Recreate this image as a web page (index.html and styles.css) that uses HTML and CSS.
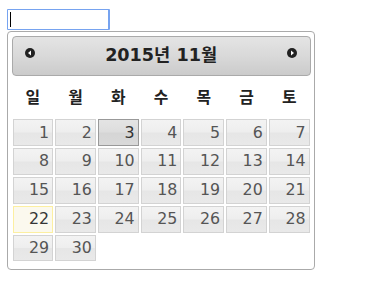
FILE: index.html
```html
<!DOCTYPE html>
<html lang="ko">
<head>
<meta charset="utf-8">
<link rel="stylesheet" href="styles.css">
</head>
<body>
<div class="page">
  <span class="field"><input class="date-input" type="text"></span>
  <div class="datepicker">
    <div class="dp-header">
      <a class="dp-nav dp-prev" title="이전달">
        <svg width="16" height="16" viewBox="0 0 16 16"><circle cx="8" cy="8" r="5" fill="#222"/><polygon points="6,8 9,5.5 9,10.5" fill="#fff"/></svg>
      </a>
      <a class="dp-nav dp-next" title="다음달">
        <svg width="16" height="16" viewBox="0 0 16 16"><circle cx="8" cy="8" r="5" fill="#222"/><polygon points="10,8 7,5.5 7,10.5" fill="#fff"/></svg>
      </a>
      <div class="dp-title">2015년 11월</div>
    </div>
    <table class="dp-cal">
      <thead>
        <tr><th>일</th><th>월</th><th>화</th><th>수</th><th>목</th><th>금</th><th>토</th></tr>
      </thead>
      <tbody>
        <tr><td><a class="day">1</a></td><td><a class="day">2</a></td><td><a class="day hover">3</a></td><td><a class="day">4</a></td><td><a class="day">5</a></td><td><a class="day">6</a></td><td><a class="day">7</a></td></tr>
        <tr><td><a class="day">8</a></td><td><a class="day">9</a></td><td><a class="day">10</a></td><td><a class="day">11</a></td><td><a class="day">12</a></td><td><a class="day">13</a></td><td><a class="day">14</a></td></tr>
        <tr><td><a class="day">15</a></td><td><a class="day">16</a></td><td><a class="day">17</a></td><td><a class="day">18</a></td><td><a class="day">19</a></td><td><a class="day">20</a></td><td><a class="day">21</a></td></tr>
        <tr><td><a class="day today">22</a></td><td><a class="day">23</a></td><td><a class="day">24</a></td><td><a class="day">25</a></td><td><a class="day">26</a></td><td><a class="day">27</a></td><td><a class="day">28</a></td></tr>
        <tr><td><a class="day">29</a></td><td><a class="day">30</a></td><td></td><td></td><td></td><td></td><td></td></tr>
      </tbody>
    </table>
  </div>
</div>
</body>
</html>
```
FILE: styles.css
```css
html, body {
  margin: 0;
  padding: 0;
  background: #fff;
}
.page {
  padding: 9px 0 0 7px;
  font-family: "DejaVu Sans", Verdana, "Noto Sans CJK KR", sans-serif;
}
.field {
  position: relative;
  display: block;
  width: 103px;
  height: 21px;
}
.field::after {
  content: "";
  position: absolute;
  left: 3px;
  top: 3px;
  width: 1px;
  height: 15px;
  background: #000;
}
.date-input {
  box-sizing: border-box;
  display: block;
  width: 103px;
  height: 21px;
  margin: 0;
  padding: 0 2px;
  border: 1px solid #76a3f0;
  border-right-width: 2px;
  border-radius: 1px;
  outline: none;
  background: #fff;
}
.datepicker {
  margin-top: 1px;
  width: 17em;
  font-size: 17.6px;
  padding: 0.2em 0.2em 0;
  border: 1px solid #aaa;
  border-radius: 4px;
  background: #fff;
  color: #222;
}
.dp-header {
  position: relative;
  padding: 0.2em 0;
  border: 1px solid #aaa;
  border-radius: 4px;
  background: linear-gradient(#e4e4e4 0%, #d9d9d9 50%, #cbcbcb 100%);
  color: #222;
  font-weight: bold;
}
.dp-nav {
  position: absolute;
  top: 8px;
  width: 16px;
  height: 16px;
}
.dp-nav svg {
  display: block;
}
.dp-prev {
  left: 9px;
}
.dp-next {
  right: 10px;
}
.dp-title {
  margin: 0 2.3em;
  line-height: 1.8em;
  text-align: center;
  font-family: "DejaVu Sans", "Noto Sans CJK KR", sans-serif;
}
.dp-cal {
  width: 100%;
  font-size: 0.9em;
  border-collapse: collapse;
  margin: 0 0 0.4em;
}
.dp-cal th {
  padding: 0.7em 0.3em;
  text-align: center;
  font-weight: bold;
  line-height: 20px;
  color: #222;
  font-family: "Noto Sans CJK KR", sans-serif;
}
.dp-cal td {
  padding: 1px;
  border: 0;
}
.day {
  display: block;
  padding: 0.2em;
  text-align: right;
  text-decoration: none;
  line-height: 18.5px;
  border: 1px solid #d3d3d3;
  background: linear-gradient(#f3f3f3 0%, #eeeeee 48%, #e6e6e6 52%, #e9e9e9 100%);
  color: #555;
  font-weight: normal;
}
.day.hover {
  border-color: #999;
  background: linear-gradient(#e4e4e4 0%, #dddddd 48%, #d5d5d5 52%, #d9d9d9 100%);
  color: #333;
}
.day.today {
  border-color: #fcefa1;
  background: #fbf9ee;
  color: #363636;
}
```
